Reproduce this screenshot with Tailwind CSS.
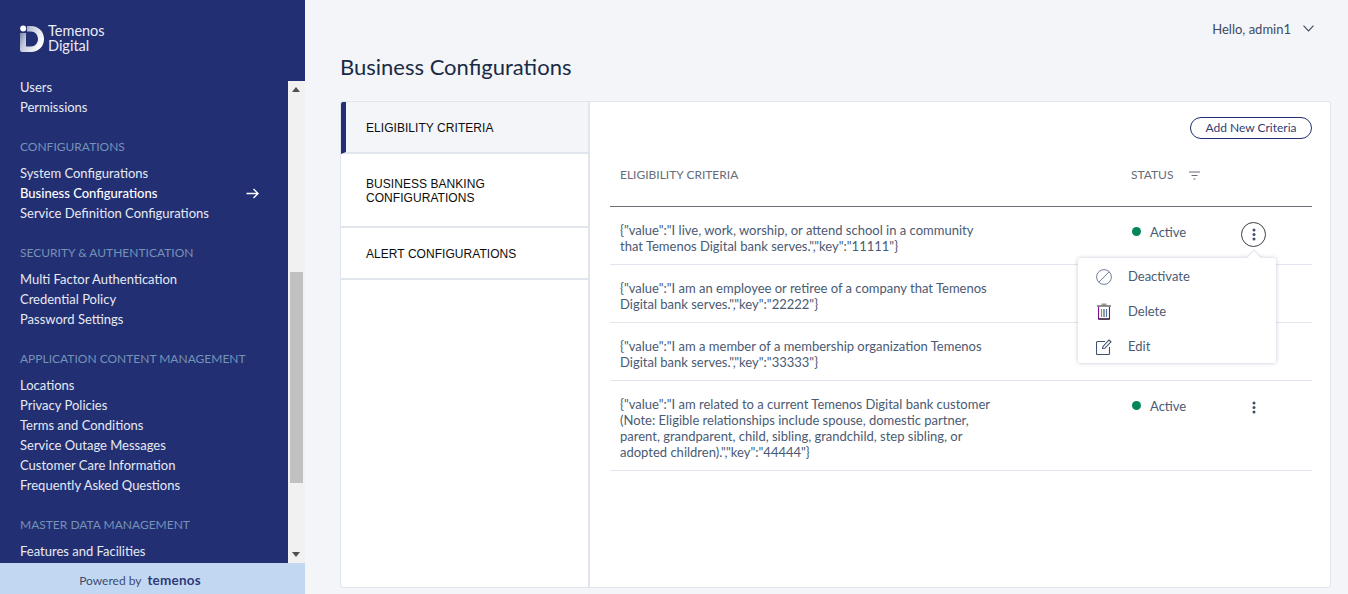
<!DOCTYPE html>
<html lang="en">
<head>
<meta charset="utf-8">
<title>Business Configurations</title>
<script src="https://cdn.jsdelivr.net/npm/@tailwindcss/browser@4"></script>
</head>
<body class="m-0 h-[594px] w-[1348px] overflow-hidden bg-[#f4f5f8] font-['Lato','Liberation_Sans',sans-serif]">
<div class="flex h-[594px] w-[1348px]">
  <aside class="flex w-[305px] shrink-0 flex-col bg-[#222f72]">
    <div class="flex h-[79px] shrink-0 items-start pl-[20px] pt-[23px]">
      <svg width="24" height="28" viewBox="0 0 24 28" class="mt-[2px]">
        <defs><linearGradient id="g" x1="0" y1="0" x2="1" y2="0.5"><stop offset="0" stop-color="#5f6a98"/><stop offset="0.4" stop-color="#c4c9dc"/><stop offset="1" stop-color="#ffffff"/></linearGradient></defs>
        <path fill="url(#g)" fill-rule="evenodd" d="M7 1h4c7.500 0 13 5.500 13 13s-5.500 13-13 13H2a2 2 0 0 1-2-2V8h6v13.500h5c4 0 7-3.500 7-7.500s-3-7.500-7-7.500H7z"/>
        <circle cx="3.200" cy="3.600" r="3" fill="#fff"/>
      </svg>
      <div class="ml-[4px] text-[14.500px] leading-[15px] text-[#e9ecf5]">Temenos<br>Digital</div>
    </div>
    <div class="flex min-h-0 flex-1">
      <nav class="min-w-0 flex-1 overflow-hidden text-[13px] leading-[20px] text-[#e6eaf4]">
        <div class="pl-[20px]">
          <div class="leading-[16px]">Users</div>
          <div class="mt-[2px]">Permissions</div>
          <div class="mt-[20px] text-[12px] text-[#7592b8]">CONFIGURATIONS</div>
          <div class="mt-[6px]">System Configurations</div>
          <div class="flex items-center justify-between pr-[29px] font-medium text-white"><span>Business Configurations</span>
            <svg width="13" height="11" viewBox="0 0 13 11" fill="none" stroke="#fff" stroke-width="1.400"><path d="M0.500 5.500h11.500M7.500 1l4.600 4.500L7.500 10"/></svg>
          </div>
          <div>Service Definition Configurations</div>
          <div class="mt-[20px] text-[12px] text-[#7592b8]">SECURITY &amp; AUTHENTICATION</div>
          <div class="mt-[6px]">Multi Factor Authentication</div>
          <div>Credential Policy</div>
          <div>Password Settings</div>
          <div class="mt-[20px] text-[12px] text-[#7592b8]">APPLICATION CONTENT MANAGEMENT</div>
          <div class="mt-[6px]">Locations</div>
          <div>Privacy Policies</div>
          <div>Terms and Conditions</div>
          <div>Service Outage Messages</div>
          <div>Customer Care Information</div>
          <div>Frequently Asked Questions</div>
          <div class="mt-[20px] text-[12px] text-[#7592b8]">MASTER DATA MANAGEMENT</div>
          <div class="mt-[6px]">Features and Facilities</div>
        </div>
      </nav>
      <div class="mt-[2px] flex w-[17px] shrink-0 flex-col bg-[#f1f1f1]">
        <div class="flex h-[17px] items-center justify-center pr-[1px]"><svg width="8" height="5" viewBox="0 0 8 5"><path d="M4 0l4 5H0z" fill="#505050"/></svg></div>
        <div class="ml-[2px] mt-[174px] h-[211px] w-[13px] bg-[#c1c1c1]"></div>
        <div class="flex-1"></div>
        <div class="flex h-[17px] items-center justify-center pr-[1px]"><svg width="8" height="5" viewBox="0 0 8 5"><path d="M4 5l4-5H0z" fill="#505050"/></svg></div>
      </div>
    </div>
    <div class="flex h-[31px] shrink-0 items-center justify-center bg-[#c2d8f2] pr-[25px] pt-[4px] text-[12px] text-[#3f4a73]">
      <span>Powered by</span><span class="ml-[6px] text-[13.500px] font-bold tracking-[0.2px] text-[#2f3a78]">temenos</span>
    </div>
  </aside>

  <main class="min-w-0 flex-1 pl-[35px] pr-[17px]">
    <header class="flex h-[58px] items-start justify-end pr-[17px] pt-[19px] text-[13px] leading-[20px] text-[#3f4a5f]">
      <span>Hello, admin1</span>
      <svg class="ml-[12px] mt-[6px]" width="11" height="7" viewBox="0 0 11 7" fill="none" stroke="#3f4a5f" stroke-width="1.100"><path d="M0.500 0.700L5.500 6l5-5.300"/></svg>
    </header>
    <h1 class="m-0 mt-[-1px] h-[44px] text-[22px] font-normal leading-[20px] text-[#192b45]">Business Configurations</h1>
    <section class="flex h-[487px] overflow-hidden rounded-[3px] border border-[#e1e5ed] bg-white">
      <div class="w-[247px] shrink-0 font-['Liberation_Sans',sans-serif] text-[12px] leading-[14px] tracking-[0.05px] text-[#0d0d0d]">
        <div class="flex h-[52px] items-center border-b-2 border-l-[5px] border-b-[#e1e5ed] border-l-[#222f72] bg-[#f4f5f8] pl-[20px] pt-[2px]">ELIGIBILITY CRITERIA</div>
        <div class="flex h-[74px] items-center border-b-2 border-b-[#e1e5ed] pl-[25px] pt-[2px]">BUSINESS BANKING<br>CONFIGURATIONS</div>
        <div class="flex h-[52px] items-center border-b-2 border-b-[#e1e5ed] pl-[25px] pt-[2px]">ALERT CONFIGURATIONS</div>
      </div>
      <div class="relative min-w-0 flex-1 border-l-2 border-l-[#e1e5ed] pl-[20px] pr-[18px]">
        <div class="flex h-[46px] items-start justify-end pt-[15px]">
          <button class="h-[22px] w-[122px] rounded-full border border-[#222f72] bg-white p-0 text-center text-[12px] leading-[20px] text-[#2f3d75]">Add New Criteria</button>
        </div>
        <div class="flex h-[59px] items-start border-b border-b-[#6c7178] pt-[19px] text-[12px] leading-[16px] text-[#666d78]">
          <div class="w-[521px] pl-[10px]">ELIGIBILITY CRITERIA</div>
          <div class="flex items-center"><span>STATUS</span>
            <svg class="ml-[16px]" width="11" height="9" viewBox="0 0 11 9" stroke="#666d78" stroke-width="1" fill="none"><path d="M0 1h11M2.500 4.500h6M4.500 8h2"/></svg>
          </div>
        </div>
        <div class="flex h-[58px] border-b border-b-[#e1e5ed] pt-[15px] text-[13px] leading-[16px] text-[#4a5a73]">
          <div class="w-[522px] pl-[10px]"><span class="block w-[370px]">{"value":"I live, work, worship, or attend school in a community that Temenos Digital bank serves.","key":"11111"}</span></div>
          <div class="mt-[2px] flex w-[109px] items-center self-start"><span class="mr-[9px] mt-[-1px] size-[9px] rounded-full bg-[#04865b]"></span><span>Active</span></div>
          <div class="flex size-[25px] items-center justify-center self-start rounded-full border border-[#3c4048]"><svg width="4" height="13" viewBox="0 0 4 13" fill="#3f4f6b"><circle cx="2" cy="2" r="1.500"/><circle cx="2" cy="6.500" r="1.500"/><circle cx="2" cy="11" r="1.500"/></svg></div>
        </div>
        <div class="h-[58px] border-b border-b-[#e1e5ed] pl-[10px] pt-[15px] text-[13px] leading-[16px] text-[#4a5a73]"><span class="block w-[370px]">{"value":"I am an employee or retiree of a company that Temenos Digital bank serves.","key":"22222"}</span></div>
        <div class="h-[58px] border-b border-b-[#e1e5ed] pl-[10px] pt-[15px] text-[13px] leading-[16px] text-[#4a5a73]"><span class="block w-[370px]">{"value":"I am a member of a membership organization Temenos Digital bank serves.","key":"33333"}</span></div>
        <div class="flex h-[90px] border-b border-b-[#e1e5ed] pt-[15px] text-[13px] leading-[16px] text-[#4a5a73]">
          <div class="w-[522px] pl-[10px]"><span class="block w-[385px]">{"value":"I am related to a current Temenos Digital bank customer (Note: Eligible relationships include spouse, domestic partner, parent, grandparent, child, sibling, grandchild, step sibling, or adopted children).","key":"44444"}</span></div>
          <div class="mt-[2px] flex w-[109px] items-center self-start"><span class="mr-[9px] mt-[-1px] size-[9px] rounded-full bg-[#04865b]"></span><span>Active</span></div>
          <div class="mt-[-1px] flex size-[25px] items-center justify-center self-start"><svg width="4" height="13" viewBox="0 0 4 13" fill="#3f4f6b"><circle cx="2" cy="2" r="1.500"/><circle cx="2" cy="6.500" r="1.500"/><circle cx="2" cy="11" r="1.500"/></svg></div>
        </div>

        <div class="absolute left-[488px] top-[156px] h-[105px] w-[198px] rounded-[3px] bg-white text-[13px] text-[#4a5a73] shadow-[0_0_4px_rgba(90,100,140,0.35)]">
          <div class="absolute left-[171px] top-[-5px] size-[10px] rotate-45 bg-white shadow-[-1px_-1px_1px_rgba(90,100,140,0.18)]"></div>
          <div class="relative flex h-[35px] items-center pl-[18px] pt-[2px]">
            <svg width="16" height="16" viewBox="0 0 16 16" fill="none" stroke="#6f7f98" stroke-width="1"><circle cx="8" cy="8" r="7.400"/><path d="M2.800 13.200L13.200 2.800"/></svg>
            <span class="ml-[16px]">Deactivate</span>
          </div>
          <div class="relative flex h-[35px] items-center pl-[18px] pt-[2px]">
            <svg width="16" height="17" viewBox="0 0 16 17" fill="none"><path d="M5.500 0.500h5v2h-5z" fill="#999"/><path d="M1 3h14" stroke="#6b6b6b" stroke-width="1.500"/><path d="M2.500 4v12h11V4" stroke="#7a0f8e" stroke-width="1.100"/><path d="M2.500 16h11" stroke="#111" stroke-width="1.100"/><path d="M5.500 6v8" stroke="#b08a30" stroke-width="1.200"/><path d="M8 6v8" stroke="#55565c" stroke-width="1.200"/><path d="M10.500 6v8" stroke="#4a78b0" stroke-width="1.200"/></svg>
            <span class="ml-[16px]">Delete</span>
          </div>
          <div class="relative flex h-[35px] items-center pl-[18px] pt-[2px]">
            <svg width="16" height="16" viewBox="0 0 16 16" fill="none" stroke="#3f5270" stroke-width="1.100"><path d="M9 2.500H1.500a1 1 0 0 0-1 1v11a1 1 0 0 0 1 1h11a1 1 0 0 0 1-1V8"/><path d="M6.500 9.500L7 7.500 13 1l2 1.800-6.200 6.500z"/></svg>
            <span class="ml-[16px]">Edit</span>
          </div>
        </div>
      </div>
    </section>
  </main>
</div>
</body>
</html>
